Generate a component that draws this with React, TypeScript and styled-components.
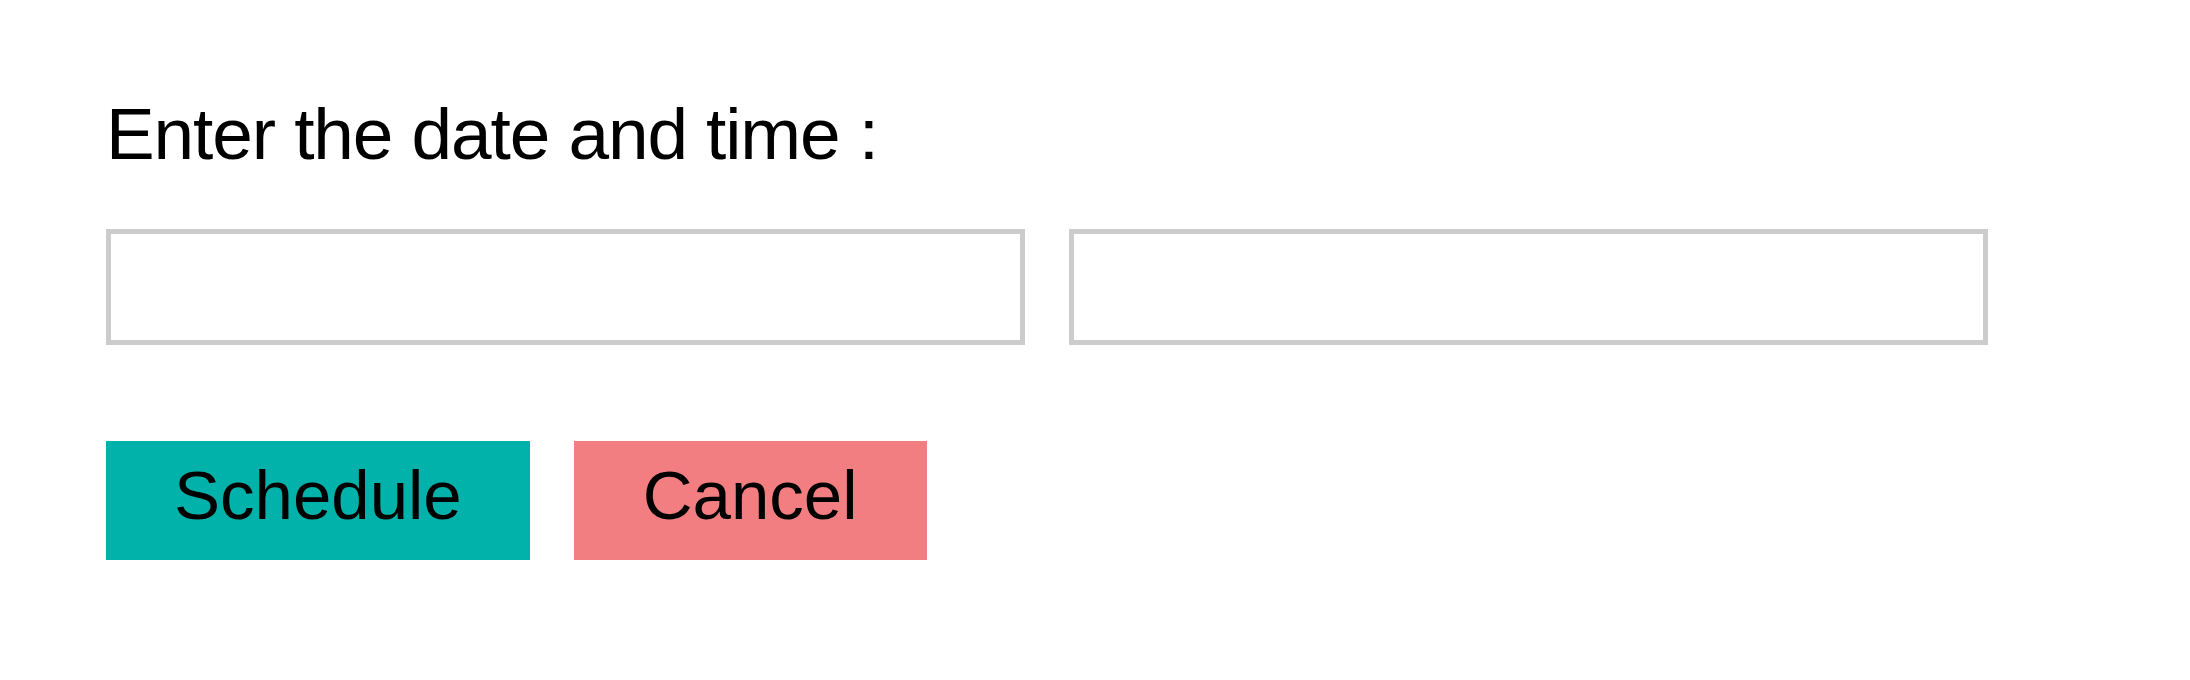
import React from "react";
import styled, { createGlobalStyle } from "styled-components";

const GlobalStyle = createGlobalStyle`
  html, body {
    margin: 0;
    padding: 0;
    background: #ffffff;
  }
  body {
    font-family: "Liberation Sans", Arial, sans-serif;
    color: #000;
  }
`;

const Page = styled.div`
  padding: 91px 0 0 106px;
  display: flex;
  flex-direction: column;
  align-items: flex-start;
`;

const Label = styled.label`
  display: block;
  font-size: 73px;
  line-height: 85px;
  letter-spacing: -1.1px;
  color: #000;
`;

const InputRow = styled.div`
  display: flex;
  gap: 44px;
  margin-top: 53px;
`;

const Field = styled.input`
  box-sizing: border-box;
  width: 919px;
  height: 116px;
  border: 5px solid #cccccc;
  background: #fff;
  outline: none;
  margin: 0;
  padding: 0 10px;
  font-family: "Liberation Sans", Arial, sans-serif;
  font-size: 40px;
`;

const ButtonRow = styled.div`
  display: flex;
  gap: 44px;
  margin-top: 96px;
`;

const Button = styled.button<{ $bg: string; $padX: number }>`
  box-sizing: border-box;
  height: 119px;
  padding: 15px ${(p) => p.$padX}px 25px;
  border: none;
  margin: 0;
  background: ${(p) => p.$bg};
  color: #000;
  font-family: "Liberation Sans", Arial, sans-serif;
  font-size: 69px;
  line-height: 79px;
  cursor: pointer;
`;

export default function App() {
  return (
    <>
      <GlobalStyle />
      <Page>
        <Label>Enter the date and time :</Label>
        <InputRow>
          <Field type="text" aria-label="date" />
          <Field type="text" aria-label="time" />
        </InputRow>
        <ButtonRow>
          <Button $bg="#00b2aa" $padX={68}>Schedule</Button>
          <Button $bg="#f37e81" $padX={69}>Cancel</Button>
        </ButtonRow>
      </Page>
    </>
  );
}
